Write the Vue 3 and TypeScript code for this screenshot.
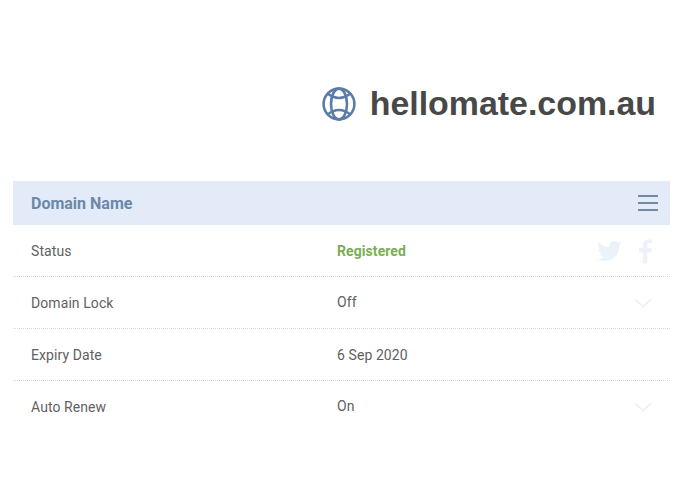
<script setup lang="ts">
interface Row {
  label: string;
  value: string;
  kind: 'status' | 'chevron' | 'none';
}
const rows: Row[] = [
  { label: 'Status', value: 'Registered', kind: 'status' },
  { label: 'Domain Lock', value: 'Off', kind: 'chevron' },
  { label: 'Expiry Date', value: '6 Sep 2020', kind: 'none' },
  { label: 'Auto Renew', value: 'On', kind: 'chevron' },
];
</script>

<template>
  <div class="page">
    <h1 class="title">
      <svg class="globe" width="34" height="34" viewBox="0 0 34 34" fill="none" stroke="#5c7ba8" stroke-width="2.6">
        <circle cx="17" cy="17" r="15.400" />
        <ellipse cx="17" cy="17" rx="8" ry="15.400" />
        <path d="M5 6 Q17 16 29 6" />
        <path d="M5 28 Q17 18 29 28" />
      </svg>
      <span>hellomate.com.au</span>
    </h1>
    <div class="table">
      <div class="head">
        <span>Domain Name</span>
        <span class="burger"><i></i><i></i><i></i></span>
      </div>
      <div v-for="(row, i) in rows" :key="row.label" class="row" :class="{ last: i === rows.length - 1 }">
        <span class="label">{{ row.label }}</span>
        <span class="value" :class="{ green: row.kind === 'status', raised: row.kind === 'chevron' }">{{ row.value }}</span>
        <span v-if="row.kind === 'status'" class="social">
          <svg width="25" height="20" viewBox="0 0 24 19" fill="#ecf2f9">
            <path d="M24 2.400c-.9.4-1.800.7-2.800.8 1-.6 1.800-1.600 2.200-2.700-1 .6-2 1-3.100 1.200C19.300.7 18 0 16.600 0c-2.700 0-4.900 2.200-4.900 4.900 0 .4 0 .8.1 1.100C7.700 5.800 4.100 3.900 1.700.9c-.4.7-.7 1.600-.7 2.500 0 1.700.9 3.200 2.200 4.100-.8 0-1.600-.2-2.200-.6v.1c0 2.400 1.700 4.400 3.900 4.800-.4.1-.8.2-1.300.2-.3 0-.6 0-.9-.1.6 2 2.400 3.400 4.600 3.400-1.700 1.300-3.800 2.100-6.100 2.100-.4 0-.8 0-1.200-.1C2.200 18.300 4.800 19 7.500 19c9.100 0 14-7.500 14-14v-.6c1-.7 1.800-1.600 2.500-2z" />
          </svg>
          <svg width="13" height="25" viewBox="0 0 14 26" fill="#ecf2f9">
            <path d="M9 26V14h4l.7-4.800H9V6.200C9 4.800 9.400 3.900 11.400 3.900H14V.2C13.500.1 12 0 10.300 0 6.700 0 4.200 2.200 4.200 6.100v3.100H0V14h4.200v12z" />
          </svg>
        </span>
        <svg v-else-if="row.kind === 'chevron'" class="chev" width="18" height="10" viewBox="0 0 18 10" fill="none" stroke="#ecf2f9" stroke-width="2">
          <path d="M1 1.500 9 8.500 17 1.500" />
        </svg>
      </div>
    </div>
  </div>
</template>

<style scoped>
.page {
  width: 695px;
  height: 494px;
  box-sizing: border-box;
  padding: 85px 25px 0 13px;
  background: #fff;
  font-family: Roboto, sans-serif;
}
.title {
  margin: 0;
  height: 96px;
  padding-right: 14px;
  display: flex;
  justify-content: flex-end;
  align-items: flex-start;
  gap: 14px;
  font-family: "Liberation Sans", Arial, sans-serif;
  font-size: 33.900px;
  font-weight: 700;
  line-height: 37px;
  color: #484848;
}
.globe { flex: none; margin-top: 2px; }
.table { width: 657px; }
.head {
  height: 44px;
  padding: 0 12px 0 18px;
  display: flex;
  align-items: center;
  justify-content: space-between;
  background: #e2ebf7;
  color: #6c88a8;
  font-size: 16px;
  font-weight: 700;
}
.burger { display: flex; flex-direction: column; gap: 5px; width: 20px; }
.burger i { display: block; height: 2px; background: #748aa4; }
.row {
  height: 52px;
  box-sizing: border-box;
  padding: 1px 0 0 18px;
  display: flex;
  align-items: center;
  border-bottom: 1px dotted #d6d6d6;
  font-size: 14px;
  letter-spacing: 0.08px;
  color: #5f5f5f;
}
.row.last { border-bottom-color: transparent; }
.label { width: 306px; flex: none; }
.value { flex: 1; }
.value.raised { margin-bottom: 2px; }
.green { color: #7bad55; font-weight: 700; }
.social {
  display: flex;
  align-items: center;
  gap: 17px;
  margin-right: 18px;
}
.chev { margin-right: 18px; }
</style>
